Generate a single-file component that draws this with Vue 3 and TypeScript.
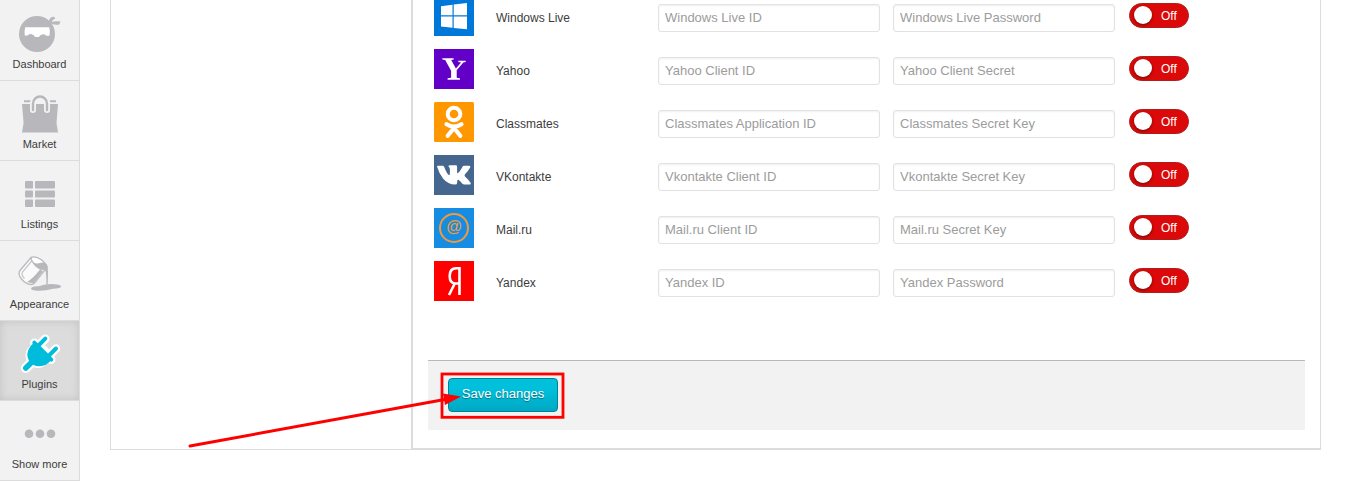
<script setup lang="ts">
import { ref } from 'vue'

interface NavItem {
  id: string
  label: string
}
interface Provider {
  id: string
  name: string
  idLabel: string
  secretLabel: string
  enabled: boolean
}

const active = ref('plugins')
const nav: NavItem[] = [
  { id: 'dashboard', label: 'Dashboard' },
  { id: 'market', label: 'Market' },
  { id: 'listings', label: 'Listings' },
  { id: 'appearance', label: 'Appearance' },
  { id: 'plugins', label: 'Plugins' },
  { id: 'more', label: 'Show more' },
]

const providers = ref<Provider[]>([
  { id: 'windows', name: 'Windows Live', idLabel: 'Windows Live ID', secretLabel: 'Windows Live Password', enabled: false },
  { id: 'yahoo', name: 'Yahoo', idLabel: 'Yahoo Client ID', secretLabel: 'Yahoo Client Secret', enabled: false },
  { id: 'ok', name: 'Classmates', idLabel: 'Classmates Application ID', secretLabel: 'Classmates Secret Key', enabled: false },
  { id: 'vk', name: 'VKontakte', idLabel: 'Vkontakte Client ID', secretLabel: 'Vkontakte Secret Key', enabled: false },
  { id: 'mailru', name: 'Mail.ru', idLabel: 'Mail.ru Client ID', secretLabel: 'Mail.ru Secret Key', enabled: false },
  { id: 'yandex', name: 'Yandex', idLabel: 'Yandex ID', secretLabel: 'Yandex Password', enabled: false },
])
</script>

<template>
  <div class="page">
    <nav class="sidebar">
      <a v-for="n in nav" :key="n.id" class="nav-item" :class="{ active: n.id === active }" @click="active = n.id">
        <svg class="nav-icon" width="60" height="50" viewBox="0 0 60 50">
          <g v-if="n.id === 'dashboard'" fill="#b7b7bc">
            <circle cx="27" cy="27" r="18" />
            <path d="M39 13.500q1.500-4 5-3.700l1.300 1.800q-2.500 1-3.700 3.400q3-1.200 9-.5l-1.400 3q-4.800 1.200-10.200-1.800z" />
            <path d="M15.200 20.300h24q1.300 4 .3 8.500h-3.300a4.300 4.300 0 0 0-7.200 1.200h-4A4.300 4.300 0 0 0 17.700 28.500h-3q-.6-4 .5-8.200z" fill="#fff" />
          </g>
          <g v-else-if="n.id === 'market'">
            <path d="M12 17h36l-1.500 19 1.500 9.500H12L13.600 36z" fill="#b7b7bc" />
            <path d="M14 14.300h7M40 14.300h6" stroke="#b7b7bc" stroke-width="2" />
            <path d="M23 23V16.500a7 7 0 0 1 14 0V23" fill="none" stroke="#f2f2f2" stroke-width="6" stroke-linecap="round" />
            <path d="M23 23V16.500a7 7 0 0 1 14 0V23" fill="none" stroke="#b7b7bc" stroke-width="2.400" stroke-linecap="round" />
          </g>
          <g v-else-if="n.id === 'listings'" fill="#b7b7bc">
            <rect x="15" y="14" width="8" height="7.500" rx="1" /><rect x="25" y="14" width="20" height="7.500" rx="1" />
            <rect x="15" y="23.500" width="8" height="7" rx="1" /><rect x="25" y="23.500" width="20" height="7" rx="1" />
            <rect x="15" y="32.500" width="8" height="7.500" rx="1" /><rect x="25" y="32.500" width="20" height="7.500" rx="1" />
          </g>
          <g v-else-if="n.id === 'appearance'">
            <path d="M21 10.500L10 23.500q-2.500 3.500 1.500 8.500t9.500 5.500q2 .2 3.500-1.500L36.500 21z" fill="#fafafa" stroke="#bdbdc1" stroke-width="1.400" />
            <path d="M22.500 13L12.500 25q-1.500 3 2 6.500" fill="none" stroke="#c6c6ca" stroke-width="1.200" />
            <path d="M30 22.500l3 1.500-9.500 12.500-6.500-1.500q6-3.500 13-12.500z" fill="#b7b7bc" />
            <path d="M21 10.500q4.500-2 10 2t6 8.500q-5 1.500-10.500-2.500t-5.500-8z" fill="#fff" stroke="#b7b7bc" stroke-width="1.200" />
            <path d="M22.500 16q5 1 8.500-.2t6 1.700q1.500 3 .7 20h-1.300q.2-12-1.400-14.500-7 1-12.500-7z" fill="#b7b7bc" />
            <path d="M21 41.500q1-2.500 8-2.300 7-2.500 15-2 7 .2 7 2.200t-8 2.300q-8 2.400-15 2.100-7-.3-7-2.300z" fill="#b7b7bc" />
          </g>
          <g v-else-if="n.id === 'plugins'" fill="none" stroke-linecap="round">
            <g stroke="#fff">
              <path d="M15.800 41L23 34" stroke-width="10" />
              <path d="M27 20l8.300-8.300M38 29.500l8-8M24.300 15.700l17 17" stroke-width="8.500" />
              <circle cx="28" cy="28.500" r="9.500" fill="#fff" stroke-width="6" />
            </g>
            <g stroke="#00bcdc">
              <path d="M15.800 41L23 34" stroke-width="5.500" />
              <path d="M27 20l8.300-8.300M38 29.500l8-8M24.300 15.700l17 17" stroke-width="4" />
            </g>
            <path d="M24.500 15.500L41.500 32.500Q37 39.300 29 39.300q-5.500 0-9-4.500T17.500 26q.8-6 7-10.500z" fill="#00bcdc" />
          </g>
          <g v-else fill="#b7b7bc">
            <circle cx="19" cy="26.800" r="4.300" /><circle cx="30" cy="26.800" r="4.300" /><circle cx="41" cy="26.800" r="4.300" />
          </g>
        </svg>
        <span>{{ n.label }}</span>
      </a>
    </nav>

    <main class="panel">
      <aside class="side"></aside>
      <section class="content">
        <div class="providers">
          <div v-for="p in providers" :key="p.id" class="row">
            <svg class="logo" width="40" height="40" viewBox="0 0 40 40">
              <template v-if="p.id === 'windows'">
                <rect width="40" height="40" fill="#0078d9" />
                <path d="M7 10.300L18.500 8.800V19.200H7zM19.700 8.600L33 7V19.200H19.700zM7 20.400H18.500V31.800L7 30.500zM19.700 20.400H33V33.200L19.700 32z" fill="#fff" />
              </template>
              <template v-else-if="p.id === 'yahoo'">
                <rect width="40" height="40" fill="#6300c8" />
                <path d="M8.300 9.200h11.400v1.400l-2.500.5 4.700 8.300 5.200-6-2.800-.4v-1.300h7.400v1.300l-2.400.6-6.600 7.600v7.500l3.300.5v1.500H13.600v-1.500l3.500-.5v-7L11.200 11l-2.900-.4z" fill="#fff" />
              </template>
              <template v-else-if="p.id === 'ok'">
                <rect width="40" height="40" rx="1.500" fill="#ff9800" />
                <g fill="none" stroke="#fff" stroke-linecap="round" stroke-linejoin="round">
                  <circle cx="20" cy="12" r="6.300" stroke-width="4" />
                  <path d="M12.500 22.300q7.500 4.800 15 0M20 26l-6.300 7.800M20 26l6.300 7.800" stroke-width="4.200" />
                </g>
              </template>
              <template v-else-if="p.id === 'vk'">
                <rect width="40" height="40" fill="#45668e" />
                <path d="M3 11.600q0-.8 1-.8h4.700q1 0 1.400 1 3 7.500 4.800 8.200 1 .2 1-1.500v-4q0-1.800-1.500-3.200 0-1 1.500-1h6q1.200 0 1.200 1.400v5.600q0 1.200.8.800 2-1.300 4.600-6.300.5-1 1.500-1h5q2 0 1 2-1.200 2.400-5 6.500-1 1.200 0 2.200 4 3.700 5.500 6.200 1 1.800-1.300 1.800h-5q-1 0-1.800-.8-3.300-3.900-4.400-3.900-.9 0-.9 3.200 0 1.500-2 1.500Q14 29.500 9 23.500 5 18.500 3 11.600z" fill="#fff" />
              </template>
              <template v-else-if="p.id === 'mailru'">
                <rect width="40" height="40" fill="#168de2" />
                <circle cx="20" cy="20" r="14" fill="none" stroke="#f29a38" stroke-width="2" />
                <text x="20" y="24.300" text-anchor="middle" class="at">@</text>
              </template>
              <template v-else>
                <rect width="40" height="40" fill="#f00" />
                <path d="M25.500 34V7.200h-3.300q-6.500 0-6.500 7.800 0 7.200 5.300 7.500H25M20.800 22.500L15 34" fill="none" stroke="#fff" stroke-width="2.600" />
              </template>
            </svg>
            <span class="name">{{ p.name }}</span>
            <input type="text" :placeholder="p.idLabel">
            <input type="text" :placeholder="p.secretLabel">
            <button type="button" class="toggle" :class="{ on: p.enabled }" @click="p.enabled = !p.enabled">
              <i class="knob"></i><span>{{ p.enabled ? 'On' : 'Off' }}</span>
            </button>
          </div>
        </div>
        <footer class="actions">
          <button type="button" class="save">Save changes</button>
        </footer>
      </section>
    </main>

    <svg class="callout" width="400" height="100" viewBox="180 365 400 100">
      <rect x="442" y="374" width="121" height="43.300" fill="none" stroke="#fe0000" stroke-width="2.800" />
      <path d="M190 446L446 399.300" stroke="#fe0000" stroke-width="3" stroke-linecap="round" />
      <path d="M461 396.500L443 393.500L445 405z" fill="#fe0000" />
    </svg>
  </div>
</template>

<style>
body {
  margin: 0;
  background: #fff;
}
</style>

<style scoped>
.page {
  position: relative;
  display: flex;
  height: 481px;
  overflow: hidden;
  font-family: "Liberation Sans", Arial, sans-serif;
  color: #444;
}
.sidebar {
  box-sizing: border-box;
  width: 80px;
  padding-top: 1px;
  background: #f2f2f2;
  border-right: 1px solid #dcdcdc;
}
.nav-item {
  box-sizing: border-box;
  display: flex;
  flex-direction: column;
  align-items: center;
  height: 80px;
  padding-top: 6px;
  border-bottom: 1px solid #dcdcdc;
  font-size: 11px;
  line-height: 14px;
  color: #3c3c3c;
  cursor: pointer;
}
.nav-item.active {
  background: #dcdcdc;
  box-shadow: inset 0 0 8px #c2c2c2;
}
.nav-icon {
  display: block;
}
.panel {
  box-sizing: border-box;
  display: flex;
  width: 1211px;
  height: 450px;
  margin-left: 30px;
  border-left: 1px solid #dcdcdc;
  border-bottom: 1px solid #dcdcdc;
}
.side {
  width: 300px;
}
.content {
  box-sizing: border-box;
  width: 910px;
  height: 450px;
  padding: 0 15px;
  overflow: hidden;
  border: solid #dcdcdc;
  border-width: 0 1px 2px 2px;
}
.providers {
  height: 364px;
  margin: -4px 0 0 6px;
}
.row {
  display: flex;
  align-items: flex-start;
  height: 40px;
  margin-bottom: 13px;
}
.logo {
  flex: none;
}
.name {
  width: 162px;
  margin-left: 22px;
  font-size: 12px;
  line-height: 45px;
  color: #3c3c3c;
}
input {
  box-sizing: border-box;
  width: 222px;
  height: 28px;
  margin: 8px 13px 0 0;
  padding: 0 6px 2px;
  border: 1px solid #e2e2e2;
  border-radius: 3px;
  box-shadow: inset 0 1px 2px #f0f0f0;
  font: 13px "Liberation Sans", Arial, sans-serif;
  outline: none;
}
input::placeholder {
  color: #9c9c9c;
  opacity: 1;
}
.toggle {
  box-sizing: border-box;
  display: flex;
  align-items: center;
  width: 60px;
  height: 25px;
  margin: 7px 0 0 1px;
  padding: 0 0 1px 4px;
  border: 1px solid #ad1e1e;
  border-radius: 13px;
  background: #db0909;
  color: #fff;
  font: 12px "Liberation Sans", Arial, sans-serif;
}
.toggle span {
  margin-top: 2px;
}
.toggle.on {
  border-color: #1e8a3c;
  background: #20a84a;
}
.knob {
  width: 18px;
  height: 18px;
  margin-right: 9px;
  border-radius: 50%;
  background: #fff;
  box-shadow: 0 1px 3px rgba(0, 0, 0, 0.5);
}
.actions {
  box-sizing: border-box;
  height: 70px;
  padding: 17px 20px;
  border-top: 1px solid #b9b9b9;
  background: #f2f2f2;
}
.save {
  box-sizing: border-box;
  display: block;
  width: 110px;
  height: 34px;
  padding: 0 0 3px;
  border: 1px solid #008296;
  border-radius: 4px;
  background: linear-gradient(#00c0dc 30%, #00a8c4);
  color: #fff;
  font: 13px "Liberation Sans", Arial, sans-serif;
  text-shadow: 0 1px 1px rgba(0, 0, 0, 0.4);
}
.at {
  fill: #f29a38;
  font: bold 16px "Liberation Sans", Arial, sans-serif;
}
.callout {
  position: absolute;
  left: 180px;
  top: 365px;
  pointer-events: none;
}
</style>
